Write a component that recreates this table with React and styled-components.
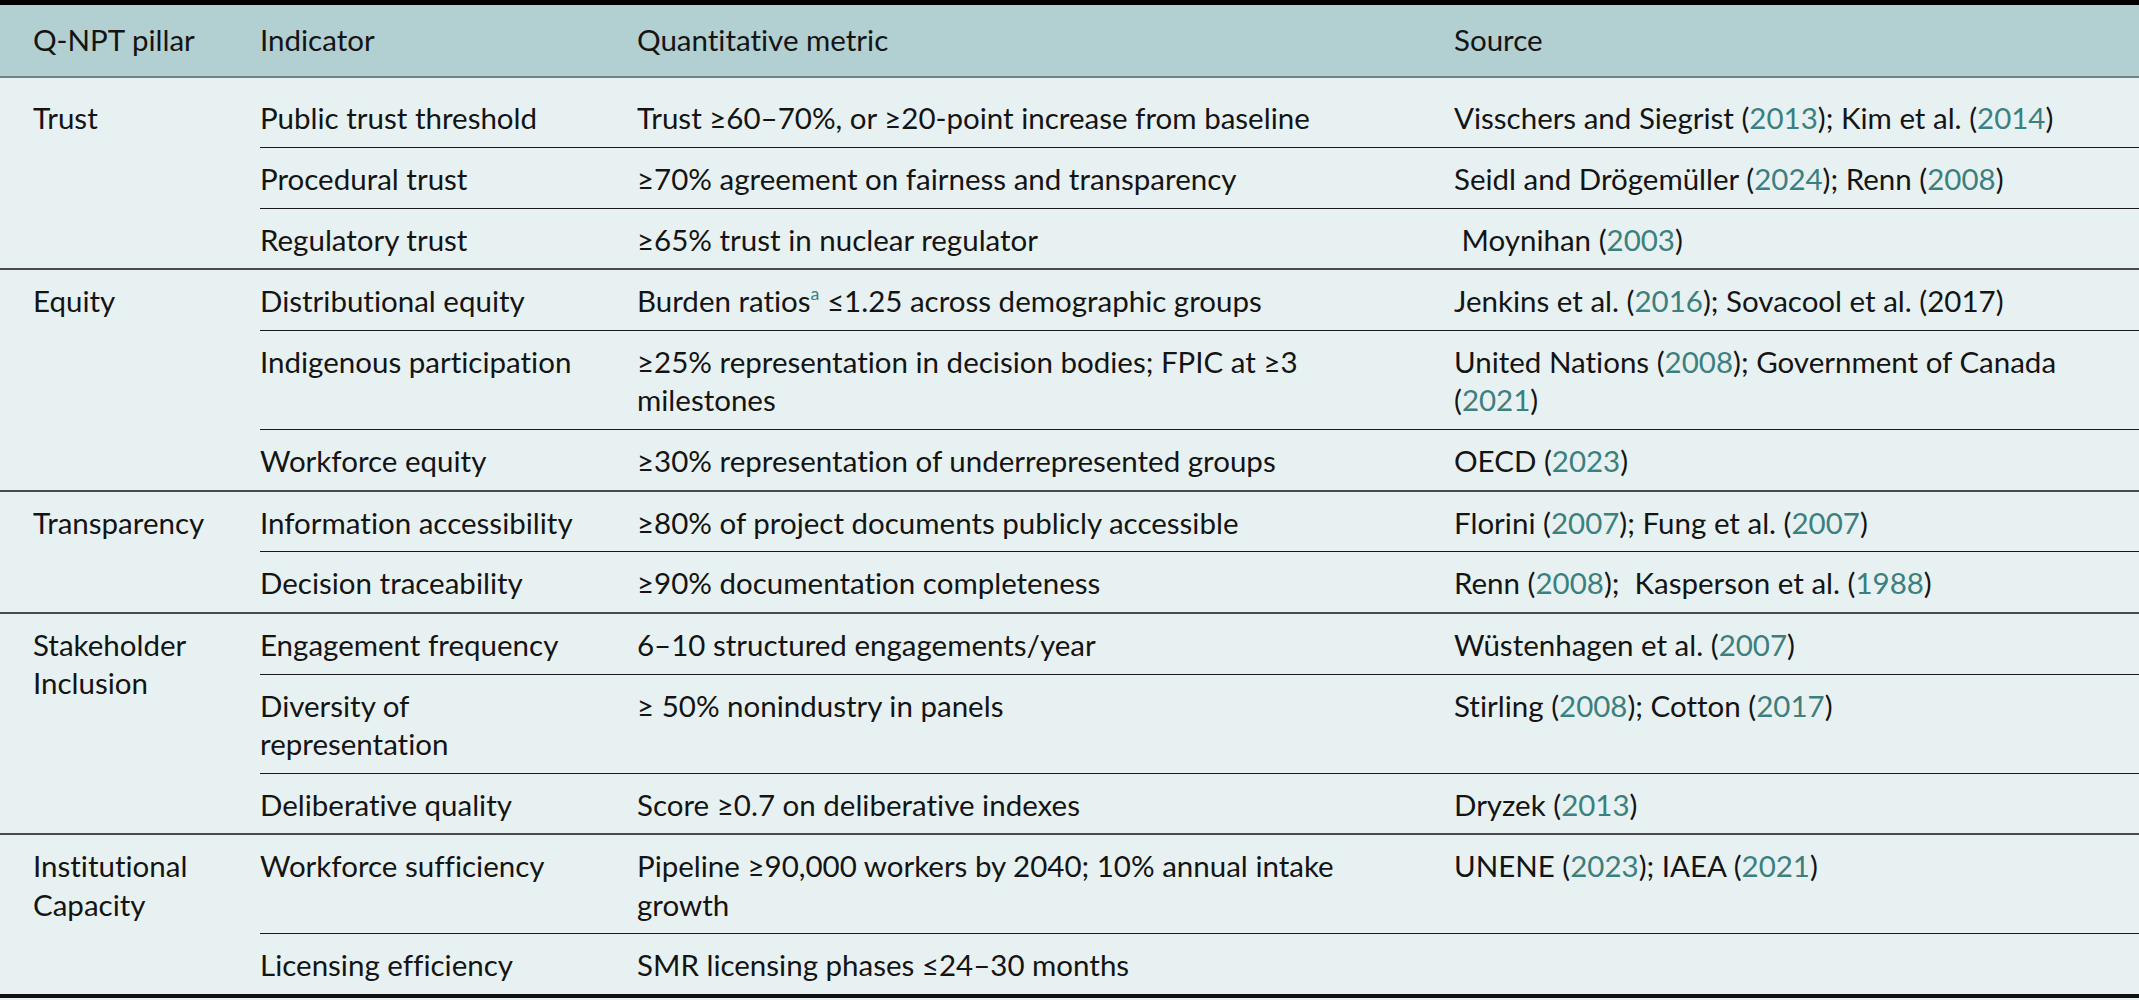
import React from "react";
import styled, { createGlobalStyle } from "styled-components";

const GlobalStyle = createGlobalStyle`
  html, body {
    margin: 0;
    padding: 0;
    background: #e8f1f1;
  }
`;

const Table = styled.table`
  width: 100%;
  border-collapse: collapse;
  table-layout: fixed;
  font-family: Lato, "Open Sans", sans-serif;
  font-size: 29.5px;
  line-height: 38.2px;
  font-variant-ligatures: none;
  color: #141414;
  background: #e8f1f1;
  border-top: 5px solid #000;
  border-bottom: 4px solid #111;
`;

const Col = styled.col`
  width: ${(p) => p.$w}px;
`;

const HeadCell = styled.th`
  background: #b2cfd1;
  font-weight: 400;
  text-align: left;
  vertical-align: top;
  padding: 16px 56px 17px ${(p) => (p.$lead ? "33px" : "0")};
  border-bottom: 2px solid #6e8486;
`;

const Cell = styled.td`
  vertical-align: top;
  padding: ${(p) => (p.$first ? "21px" : "12px")} 56px 9.5px
    ${(p) => (p.$lead ? "33px" : "0")};
  border-top: ${(p) => (p.$section ? "2px solid #4a4a4a" : "none")};
  border-bottom: ${(p) => (p.$inner ? "1.5px solid #1a1a1a" : "none")};
`;

const Cite = styled.span`
  color: #3b7f7e;
`;

const Sup = styled.sup`
  color: #3b7f7e;
  font-size: 0.6em;
  line-height: 0;
  vertical-align: 0.7em;
`;

const data = [
  {
    pillar: "Trust",
    rows: [
      [
        "Public trust threshold",
        "Trust ≥60–70%, or ≥20-point increase from baseline",
        <>
          Visschers and Siegrist (<Cite>2013</Cite>); Kim et al. (<Cite>2014</Cite>)
        </>,
      ],
      [
        "Procedural trust",
        "≥70% agreement on fairness and transparency",
        <>
          Seidl and Drögemüller (<Cite>2024</Cite>); Renn (<Cite>2008</Cite>)
        </>,
      ],
      [
        "Regulatory trust",
        "≥65% trust in nuclear regulator",
        <>
          {"\u00a0"}Moynihan (<Cite>2003</Cite>)
        </>,
      ],
    ],
  },
  {
    pillar: "Equity",
    rows: [
      [
        "Distributional equity",
        <>
          Burden ratios<Sup>a</Sup> ≤1.25 across demographic groups
        </>,
        <>
          Jenkins et al. (<Cite>2016</Cite>); Sovacool et al. (2017)
        </>,
      ],
      [
        "Indigenous participation",
        "≥25% representation in decision bodies; FPIC at ≥3 milestones",
        <>
          United Nations (<Cite>2008</Cite>); Government of Canada (<Cite>2021</Cite>)
        </>,
      ],
      [
        "Workforce equity",
        "≥30% representation of underrepresented groups",
        <>
          OECD (<Cite>2023</Cite>)
        </>,
      ],
    ],
  },
  {
    pillar: "Transparency",
    rows: [
      [
        "Information accessibility",
        "≥80% of project documents publicly accessible",
        <>
          Florini (<Cite>2007</Cite>); Fung et al. (<Cite>2007</Cite>)
        </>,
      ],
      [
        "Decision traceability",
        "≥90% documentation completeness",
        <>
          Renn (<Cite>2008</Cite>);{"\u00a0"} Kasperson et al. (<Cite>1988</Cite>)
        </>,
      ],
    ],
  },
  {
    pillar: "Stakeholder Inclusion",
    rows: [
      [
        "Engagement frequency",
        "6–10 structured engagements/year",
        <>
          Wüstenhagen et al. (<Cite>2007</Cite>)
        </>,
      ],
      [
        "Diversity of representation",
        "≥ 50% nonindustry in panels",
        <>
          Stirling (<Cite>2008</Cite>); Cotton (<Cite>2017</Cite>)
        </>,
      ],
      [
        "Deliberative quality",
        "Score ≥0.7 on deliberative indexes",
        <>
          Dryzek (<Cite>2013</Cite>)
        </>,
      ],
    ],
  },
  {
    pillar: "Institutional Capacity",
    rows: [
      [
        "Workforce sufficiency",
        "Pipeline ≥90,000 workers by 2040; 10% annual intake growth",
        <>
          UNENE (<Cite>2023</Cite>); IAEA (<Cite>2021</Cite>)
        </>,
      ],
      ["Licensing efficiency", "SMR licensing phases ≤24–30 months", ""],
    ],
  },
];

export default function App() {
  return (
    <>
      <GlobalStyle />
      <Table>
        <colgroup>
          <Col $w={260} />
          <Col $w={377} />
          <Col $w={817} />
          <Col $w={685} />
        </colgroup>
        <thead>
          <tr>
            <HeadCell $lead>Q-NPT pillar</HeadCell>
            <HeadCell>Indicator</HeadCell>
            <HeadCell>Quantitative metric</HeadCell>
            <HeadCell>Source</HeadCell>
          </tr>
        </thead>
        <tbody>
          {data.map((group, gi) =>
            group.rows.map((row, ri) => {
              var section = gi > 0 && ri === 0;
              var first = gi === 0 && ri === 0;
              var inner = ri < group.rows.length - 1;
              return (
                <tr key={gi + "-" + ri}>
                  {ri === 0 && (
                    <Cell
                      $lead
                      $section={section}
                      $first={first}
                      rowSpan={group.rows.length}>
                      {group.pillar}
                    </Cell>
                  )}
                  {row.map((text, ci) => (
                    <Cell
                      key={ci}
                      $section={section}
                      $first={first}
                      $inner={inner}>
                      {text}
                    </Cell>
                  ))}
                </tr>
              );
            })
          )}
        </tbody>
      </Table>
    </>
  );
}
